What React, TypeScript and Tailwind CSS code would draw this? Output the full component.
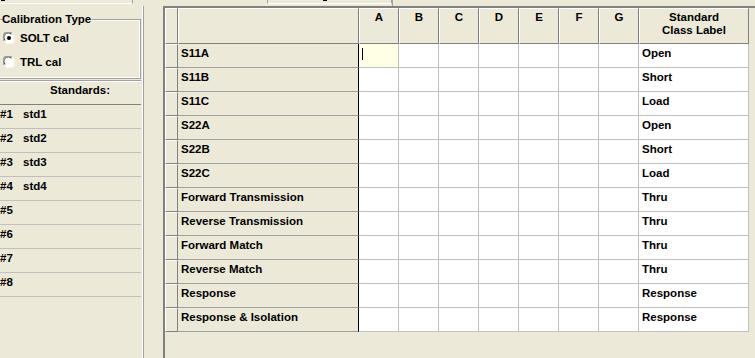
const labels = [
  'S11A',
  'S11B',
  'S11C',
  'S22A',
  'S22B',
  'S22C',
  'Forward Transmission',
  'Reverse Transmission',
  'Forward Match',
  'Reverse Match',
  'Response',
  'Response & Isolation',
]
const classes = ['Open', 'Short', 'Load', 'Open', 'Short', 'Load', 'Thru', 'Thru', 'Thru', 'Thru', 'Response', 'Response']
const cols = ['A', 'B', 'C', 'D', 'E', 'F', 'G']

function Radio({ checked }: { checked?: boolean }) {
  return (
    <svg width="12" height="12" viewBox="0 0 12 12" className="shrink-0">
      <circle cx="6" cy="6" r="5.5" fill="#fff" />
      <path d="M1.2 9 A5.5 5.5 0 0 1 9 1.2" stroke="#808080" strokeWidth="1" fill="none" />
      <path d="M2.2 8.4 A4.3 4.3 0 0 1 8.4 2.2" stroke="#404040" strokeWidth="1" fill="none" />
      <path d="M10.8 3 A5.5 5.5 0 0 1 3 10.8" stroke="#fff" strokeWidth="1" fill="none" />
      {checked && <circle cx="6" cy="6" r="2" fill="#000" />}
    </svg>
  )
}

export default function App() {
  return (
    <div className="w-[755px] h-[358px] overflow-hidden bg-[#ECE9D8] text-black font-['Liberation_Sans',Arial,sans-serif] text-[11.5px] font-bold leading-[13px]">
      {/* clipped controls above */}
      <div className="flex h-[6px]">
        <div className="w-[133px] h-[4px] border-b border-r border-b-white border-r-[#a0a0a0] relative">
          <div className="absolute left-[1px] top-0 w-[4px] h-[1px] bg-black" />
        </div>
        <div className="ml-[134px] w-[125px] h-[4px] border-l border-b border-r border-l-[#a0a0a0] border-b-white border-r-[#a0a0a0] relative">
          <div className="absolute left-[55px] top-0 w-[4px] h-[1px] bg-black" />
        </div>
        <div className="w-[1px] h-[6px] bg-[#a0a0a0]" />
      </div>

      <div className="flex h-[352px]">
        {/* left panel */}
        <div className="w-[144px] border-r-2 border-r-[#a0a0a0] relative">
          <div className="absolute right-[-1px] top-0 bottom-0 w-[1px] bg-white" />
          <div className="mt-[13px] mr-[1px] border-t border-b border-r border-[#a0a0a0] relative">
            <div className="border-t border-b border-r border-white pt-[5px] pb-[3px]">
              <span className="absolute left-[2px] top-[-7px] bg-[#ECE9D8] pr-[1px]">Calibration Type</span>
              <div className="h-[24px] flex items-center pl-[3px] gap-[5px]">
                <Radio checked />
                <span>SOLT cal</span>
              </div>
              <div className="h-[24px] flex items-center pl-[3px] gap-[5px]">
                <Radio />
                <span>TRL cal</span>
              </div>
            </div>
          </div>
          <div className="mt-[1px] h-[1px] bg-[#a0a0a0] mr-[1px]" />
          <div className="h-[1px] bg-white mr-[1px]" />
          <div className="h-[23px] pl-[50px] pt-[2px] border-b border-b-[#808080] mr-[1px]">Standards:</div>
          {Array.from({ length: 8 }, (_, i) => (
            <div key={i} className="h-[24px] pt-[3px] flex border-b border-b-[#c0c0c0] mr-[1px]">
              <span className="w-[23px]">#{i + 1}</span>
              {i < 4 && <span>std{i + 1}</span>}
            </div>
          ))}
        </div>

        {/* grid */}
        <div className="ml-[19px] flex-1 border-l-2 border-t-2 border-[#808080]">
          <div className="grid grid-cols-[13px_181px_repeat(7,40px)_110px]">
            <div className="h-[36px] border border-t-white border-l-white border-b-[#808080] border-r-[#808080]" />
            <div className="h-[36px] border border-t-white border-l-white border-b-[#808080] border-r-[#808080]" />
            {cols.map((c) => (
              <div
                key={c}
                className="h-[36px] border border-t-white border-l-white border-b-[#808080] border-r-[#808080] text-center pt-[2px]"
              >
                {c}
              </div>
            ))}
            <div className="h-[36px] border border-t-white border-l-white border-b-[#808080] border-r-[#808080] text-center pt-[2px]">
              Standard
              <br />
              Class Label
            </div>

            {labels.map((label, r) => (
              <div key={label} className="contents">
                <div className="h-[24px] border border-t-white border-l-white border-b-[#808080] border-r-[#808080]" />
                <div className="h-[24px] border-b border-r border-b-[#a0a0a0] border-r-black pl-[3px] pt-[3px] whitespace-nowrap">
                  {label}
                </div>
                {cols.map((c, ci) => (
                  <div
                    key={c}
                    className={
                      r === 0 && ci === 0
                        ? 'h-[24px] border-b border-r border-[#c0c0c0] bg-[#ffffe6] relative'
                        : 'h-[24px] border-b border-r border-[#c0c0c0] bg-white'
                    }
                  >
                    {r === 0 && ci === 0 && <div className="absolute left-[3px] top-[4px] w-[1px] h-[12px] bg-black" />}
                  </div>
                ))}
                <div className="h-[24px] border-b border-r border-[#c0c0c0] bg-white pl-[3px] pt-[3px]">{classes[r]}</div>
              </div>
            ))}
          </div>
        </div>
      </div>
    </div>
  )
}
